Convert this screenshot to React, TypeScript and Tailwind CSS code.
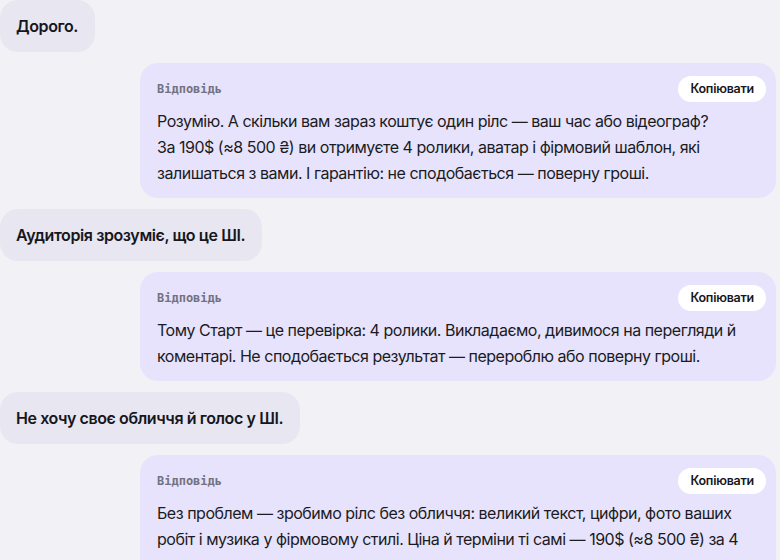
import React from 'react';

type Message =
  | { role: 'user'; text: string }
  | { role: 'assistant'; lines: string[] };

const messages: Message[] = [
  { role: 'user', text: 'Дорого.' },
  {
    role: 'assistant',
    lines: [
      'Розумію. А скільки вам зараз коштує один рілс — ваш час або відеограф?',
      'За 190$ (≈8 500 ₴) ви отримуєте 4 ролики, аватар і фірмовий шаблон, які залишаться з вами. І гарантію: не сподобається — поверну гроші.',
    ],
  },
  { role: 'user', text: 'Аудиторія зрозуміє, що це ШІ.' },
  {
    role: 'assistant',
    lines: [
      'Тому Старт — це перевірка: 4 ролики. Викладаємо, дивимося на перегляди й коментарі. Не сподобається результат — перероблю або поверну гроші.',
    ],
  },
  { role: 'user', text: 'Не хочу своє обличчя й голос у ШІ.' },
  {
    role: 'assistant',
    lines: [
      'Без проблем — зробимо рілс без обличчя: великий текст, цифри, фото ваших робіт і музика у фірмовому стилі. Ціна й терміни ті самі — 190$ (≈8 500 ₴) за 4 ролики.',
    ],
  },
];

function UserBubble({ text }: { text: string }) {
  return (
    <div className="flex justify-start">
      <div className="rounded-[18px] bg-[#e8e6f0] pl-4 pr-[17px] py-4 text-[16px] leading-5 font-semibold tracking-[-0.025em] text-[#16161d]">
        {text}
      </div>
    </div>
  );
}

function AssistantBubble({ lines }: { lines: string[] }) {
  return (
    <div className="flex justify-end pl-[140px] pr-1">
      <div className="w-full rounded-[18px] bg-[#e7e3fd] pl-[17px] pr-[10px] pt-[13px] pb-3">
        <div className="flex items-center justify-between">
          <span className="font-['DejaVu_Sans_Mono',monospace] text-[12px] font-bold text-[#74727f]">
            Відповідь
          </span>
          <button className="h-[26px] rounded-full bg-white px-3 text-[12.5px] font-semibold tracking-[-0.02em] text-[#16161d]">
            Копіювати
          </button>
        </div>
        <div className="mt-[6px] pr-[6px] text-[16px] leading-[26px] tracking-[-0.03em] text-[#1b1b22]">
          {lines.map((line, i) => (
            <p key={i}>{line}</p>
          ))}
        </div>
      </div>
    </div>
  );
}

export default function App() {
  return (
    <div className="h-[560px] w-[780px] overflow-hidden bg-[#f2f1f6] font-['Inter',sans-serif]">
      <div className="flex flex-col gap-[11px]">
        {messages.map((m, i) =>
          m.role === 'user' ? (
            <UserBubble key={i} text={m.text} />
          ) : (
            <AssistantBubble key={i} lines={m.lines} />
          )
        )}
      </div>
    </div>
  );
}
